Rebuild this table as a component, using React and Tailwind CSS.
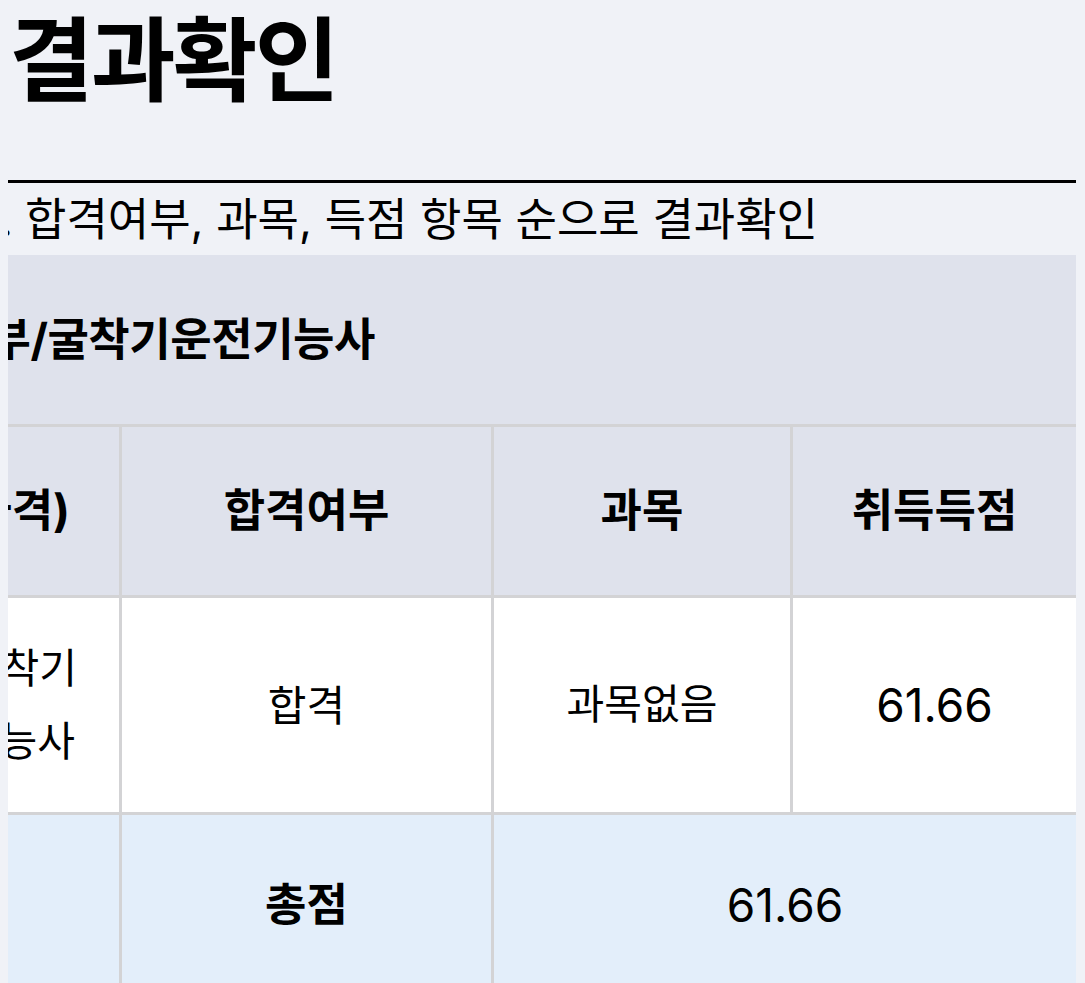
export default function App() {
  return (
    <div className="min-h-[983px] bg-[#f0f2f7] pl-2 pr-[9px] font-['Inter','Noto_Sans_CJK_KR',sans-serif] text-black">
      <div className="overflow-hidden">
        <h1 className="h-[120px] pt-[6px] pl-[1px] text-[92px] font-bold leading-[110px] tracking-[-0.03em]">결과확인</h1>
        <div className="mt-[60px] h-[3px] bg-black" />
        <div className="flex h-[72px] items-center whitespace-nowrap text-[45px] leading-none">
          <span className="-ml-[8px] w-[25px] shrink-0">.</span>
          <span>합격여부, 과목, 득점 항목 순으로 결과확인</span>
        </div>
        <div className="grid grid-cols-[111px_369px_296px_283px] gap-[3px] bg-[#d3d3d5]">
          <div className="col-span-4 flex h-[169px] items-center bg-[#dfe2ec]">
            <div className="flex w-[367px] shrink-0 justify-end whitespace-nowrap text-[45px] font-bold tracking-[-0.01em]">
              합격여부/굴착기운전기능사
            </div>
          </div>

          <div className="flex h-[168px] items-center justify-end whitespace-nowrap bg-[#dfe2ec] pr-[49px] text-[45px] font-bold">
            종목(자격)
          </div>
          <div className="flex items-center justify-center bg-[#dfe2ec] text-[45px] font-bold">합격여부</div>
          <div className="flex items-center justify-center bg-[#dfe2ec] text-[45px] font-bold">과목</div>
          <div className="flex items-center justify-center bg-[#dfe2ec] text-[45px] font-bold">취득득점</div>

          <div className="flex h-[214px] flex-col items-end justify-center whitespace-nowrap bg-white pr-[42px] text-[41px] leading-[73px]">
            <span>굴착기</span>
            <span className="pr-[2px]">운전기능사</span>
          </div>
          <div className="flex items-center justify-center bg-white text-[42px]">합격</div>
          <div className="flex items-center justify-center bg-white text-[41px]">과목없음</div>
          <div className="flex items-center justify-center bg-white text-[46px]">61.66</div>

          <div className="h-[180px] bg-[#e3eefa]" />
          <div className="flex items-center justify-center bg-[#e3eefa] text-[45px] font-bold">총점</div>
          <div className="col-span-2 flex items-center justify-center bg-[#e3eefa] text-[46px]">61.66</div>
        </div>
      </div>
    </div>
  );
}
